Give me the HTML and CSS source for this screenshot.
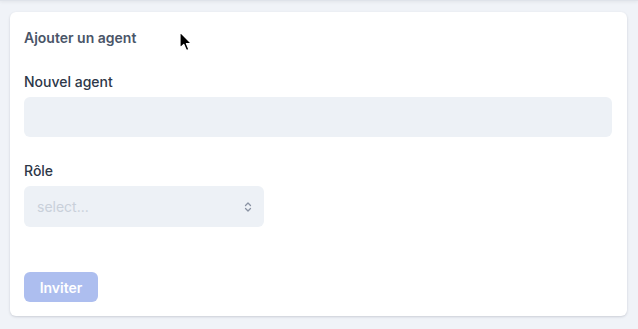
FILE: index.html
```html
<!DOCTYPE html>
<html lang="fr">
<head>
<meta charset="utf-8">
<link rel="stylesheet" href="styles.css">
</head>
<body>
<div class="topbar"></div>
<main class="page">
  <section class="card">
    <h2 class="card-title">Ajouter un agent</h2>
    <div class="field">
      <label class="label" for="agent">Nouvel agent</label>
      <input id="agent" class="input" type="text">
    </div>
    <div class="field">
      <label class="label" for="role">Rôle</label>
      <div class="select">
        <span class="placeholder">select...</span>
        <svg class="chev" width="8" height="12" viewBox="0 0 8 12"><path d="M1.5 4.5 L4 2 L6.5 4.5 M1.5 7.5 L4 10 L6.5 7.5" fill="none" stroke="#8a93a3" stroke-width="1.3" stroke-linecap="round" stroke-linejoin="round"/></svg>
      </div>
    </div>
    <button class="btn" type="button">Inviter</button>
  </section>
</main>
<svg class="cursor" width="14" height="22" viewBox="0 0 14 22"><path d="M1 1 L1 17 L4.8 13.4 L7.4 19.6 L9.9 18.5 L7.4 12.5 L12.4 12.5 Z" fill="#000" stroke="#fff" stroke-width="1.2" stroke-linejoin="round"/></svg>
</body>
</html>
```
FILE: styles.css
```css
html, body {
  margin: 0;
  padding: 0;
}
body {
  background: #f0f3f8;
  font-family: Inter, "Noto Sans", sans-serif;
  width: 638px;
  height: 329px;
  overflow: hidden;
  position: relative;
}
.topbar {
  height: 1px;
  background: #dfe3ea;
  box-shadow: 0 1px 3px rgba(0,0,0,0.12);
}
.page {
  padding: 11px 11px 0 10px;
}
.card {
  background: #fff;
  border-radius: 6px;
  box-shadow: 0 1px 3px rgba(30,40,60,0.12), 0 1px 2px rgba(30,40,60,0.06);
  padding: 16px 15px 14px 14px;
  height: 304px;
  box-sizing: border-box;
  display: flex;
  flex-direction: column;
}
.card-title {
  margin: 0;
  font-size: 14px;
  line-height: 20px;
  font-weight: 600;
  color: #4a5568;
}
.field {
  display: flex;
  flex-direction: column;
  margin-top: 24px;
}
.label {
  font-size: 14px;
  line-height: 20px;
  font-weight: 500;
  color: #2d3748;
  margin-bottom: 5px;
}
.input {
  height: 40px;
  border: none;
  border-radius: 6px;
  background: #edf1f6;
  margin: 0;
  padding: 0 12px;
  outline: none;
}
.select {
  width: 240px;
  height: 41px;
  border-radius: 6px;
  background: #edf1f6;
  display: flex;
  align-items: center;
  justify-content: space-between;
  padding: 0 12px 0 13px;
  box-sizing: border-box;
}
.placeholder {
  font-size: 14px;
  color: #c9d0da;
}
.chev {
  display: block;
}
.btn {
  margin-top: auto;
  align-self: flex-start;
  height: 30px;
  width: 74px;
  border: none;
  border-radius: 6px;
  background: #adbeef;
  color: #fff;
  font-family: Inter, "Noto Sans", sans-serif;
  font-size: 14px;
  font-weight: 600;
  padding: 0;
}
.cursor {
  position: absolute;
  left: 179px;
  top: 31px;
}
```
